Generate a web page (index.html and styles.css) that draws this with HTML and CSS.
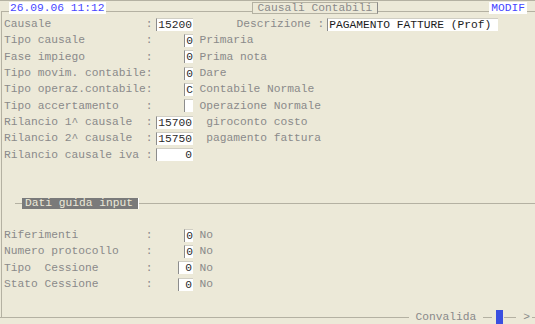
FILE: index.html
```html
<!DOCTYPE html>
<html lang="it">
<head>
    <meta charset="UTF-8">
    <meta name="viewport" content="width=device-width, initial-scale=1.0">
    <title>Causali Contabili</title>
    <link rel="stylesheet" href="styles.css">
</head>
<body>
    <div class="window">
        <div class="frame">
            <div class="head">
                <span class="clock">26.09.06 11:12</span>
                <span class="title">Causali Contabili</span>
                <span class="mode">MODIF</span>
            </div>

            <div class="rows">
                <div class="row">
                    <span class="label">Causale</span><span class="colon">:</span>
                    <span class="cell"><span class="fld fld-5">15200</span></span>
                    <span class="desc"><span class="desc-key">Descrizione :</span><span class="fld fld-text">PAGAMENTO FATTURE (Prof)</span></span>
                </div>
                <div class="row">
                    <span class="label">Tipo causale</span><span class="colon">:</span>
                    <span class="cell"><span class="fld fld-1">0</span></span>
                    <span class="desc">Primaria</span>
                </div>
                <div class="row">
                    <span class="label">Fase impiego</span><span class="colon">:</span>
                    <span class="cell"><span class="fld fld-1">0</span></span>
                    <span class="desc">Prima nota</span>
                </div>
                <div class="row">
                    <span class="label">Tipo movim. contabile</span><span class="colon">:</span>
                    <span class="cell"><span class="fld fld-1">0</span></span>
                    <span class="desc">Dare</span>
                </div>
                <div class="row">
                    <span class="label">Tipo operaz.contabile</span><span class="colon">:</span>
                    <span class="cell"><span class="fld fld-1">C</span></span>
                    <span class="desc">Contabile Normale</span>
                </div>
                <div class="row">
                    <span class="label">Tipo accertamento</span><span class="colon">:</span>
                    <span class="cell"><span class="fld fld-1"></span></span>
                    <span class="desc">Operazione Normale</span>
                </div>
                <div class="row">
                    <span class="label">Rilancio 1^ causale</span><span class="colon">:</span>
                    <span class="cell"><span class="fld fld-5">15700</span></span>
                    <span class="desc"> giroconto costo</span>
                </div>
                <div class="row">
                    <span class="label">Rilancio 2^ causale</span><span class="colon">:</span>
                    <span class="cell"><span class="fld fld-5">15750</span></span>
                    <span class="desc"> pagamento fattura</span>
                </div>
                <div class="row">
                    <span class="label">Rilancio causale iva</span><span class="colon">:</span>
                    <span class="cell"><span class="fld fld-5">0</span></span>
                    <span class="desc"></span>
                </div>
            </div>

            <div class="section">
                <span class="rule rule-lead"></span>
                <span class="tag">Dati guida input</span>
                <span class="rule"></span>
            </div>

            <div class="rows rows-guide">
                <div class="row">
                    <span class="label">Riferimenti</span><span class="colon">:</span>
                    <span class="cell"><span class="fld fld-1">0</span></span>
                    <span class="desc">No</span>
                </div>
                <div class="row">
                    <span class="label">Numero protocollo</span><span class="colon">:</span>
                    <span class="cell"><span class="fld fld-1">0</span></span>
                    <span class="desc">No</span>
                </div>
                <div class="row">
                    <span class="label">Tipo  Cessione</span><span class="colon">:</span>
                    <span class="cell"><span class="fld fld-2">0</span></span>
                    <span class="desc">No</span>
                </div>
                <div class="row">
                    <span class="label">Stato Cessione</span><span class="colon">:</span>
                    <span class="cell"><span class="fld fld-2">0</span></span>
                    <span class="desc">No</span>
                </div>
            </div>
        </div>

        <div class="foot">
            <span class="rule"></span>
            <span class="foot-label">Convalida</span>
            <span class="rule seg-a"></span>
            <span class="cursor"></span>
            <span class="rule seg-b"></span>
            <span class="arrow">&gt;</span>
            <span class="rule seg-c"></span>
        </div>
    </div>
</body>
</html>
```

FILE: styles.css
```css
body {
    margin: 0;
    background: #ece9d8;
    font-family: "Liberation Mono", monospace;
    font-size: 11.25px;
    color: #8a8a8a;
}
.window {
    border-top: 1px solid #b4b1a2;
    height: 323px;
    overflow: hidden;
}
.frame {
    margin-top: 10px;
    margin-left: 1px;
    height: 306px;
    border-top: 1px solid #b4b1a2;
    border-left: 1px solid #b4b1a2;
}
.head {
    display: flex;
    align-items: flex-start;
    height: 14px;
    margin-top: -10px;
}
.clock {
    margin-left: 7px;
    padding: 0 1px;
    background: #fff;
    color: #4646ff;
    line-height: 12px;
}
.title {
    margin-left: 146px;
    padding: 0 5px;
    line-height: 10px;
    background: #ece9d8;
    border: 1px solid #b4b1a2;
    border-right-color: #8a8a8a;
}
.mode {
    margin-left: auto;
    margin-right: 8px;
    padding: 0 2px;
    background: #fff;
    color: #4646ff;
    line-height: 12px;
}
.row {
    display: flex;
    align-items: center;
    height: 16.33px;
}
.label {
    width: 21ch;
    padding-left: 2px;
    white-space: pre;
}
.colon {
    width: 1ch;
}
.cell {
    width: 6ch;
    display: flex;
    justify-content: flex-end;
}
.desc {
    margin-left: 6.5px;
    white-space: pre;
    display: flex;
    align-items: center;
}
.desc-key {
    margin-left: 37px;
}
.fld {
    box-sizing: border-box;
    height: 13px;
    line-height: 13px;
    background: #fff;
    border-left: 1px solid #8c8c8c;
    border-top: 1px solid #d0cec4;
    color: #2a2a2a;
    text-align: right;
    padding-right: 1px;
}
.fld-1 {
    width: 9px;
    padding-right: 0;
}
.fld-2 {
    width: 15px;
}
.fld-5 {
    width: 37px;
}
.fld-text {
    width: 171px;
    margin-left: 3px;
    padding-left: 1px;
    text-align: left;
    color: #1c1c1c;
}
.section {
    display: flex;
    align-items: center;
    height: 11px;
    margin-top: 35px;
}
.rule {
    flex: 1;
    border-top: 1px solid #b4b1a2;
}
.rule-lead {
    flex: none;
    width: 7px;
    margin-left: 13px;
}
.tag {
    padding: 0 5px 0 3px;
    line-height: 11px;
    background: #7a7a7a;
    color: #ece9d8;
    border-right: 1px solid #fff;
}
.rows-guide {
    margin-top: 18px;
}
.foot {
    display: flex;
    align-items: center;
    height: 14px;
    margin-top: -8px;
}
.foot-label {
    padding: 0 7px 0 6px;
}
.seg-a {
    flex: none;
    width: 9px;
}
.cursor {
    width: 7px;
    height: 14px;
    margin: 0 1px 0 4px;
    background: #3a4fe0;
}
.seg-b {
    flex: none;
    width: 12px;
}
.arrow {
    margin-left: 7px;
}
.seg-c {
    flex: none;
    width: 3px;
    margin-left: 2px;
}
```
